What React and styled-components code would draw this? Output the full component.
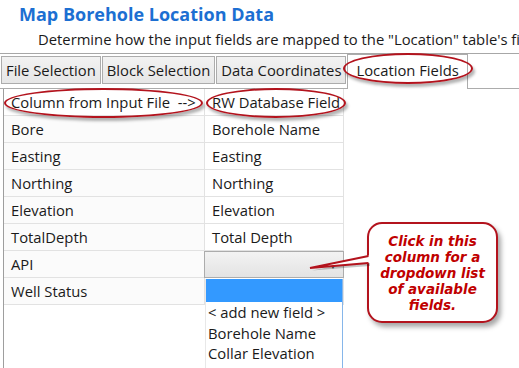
import React from 'react';
import styled, { createGlobalStyle } from 'styled-components';

const GlobalStyle = createGlobalStyle`
  html, body {
    margin: 0;
    padding: 0;
    background: #ffffff;
  }
  * {
    box-sizing: border-box;
  }
`;

const Page = styled.div`
  position: relative;
  width: 519px;
  height: 368px;
  overflow: hidden;
  display: flex;
  flex-direction: column;
  font-family: "Open Sans", "Noto Sans", sans-serif;
  color: #1a1a1a;
`;

const Header = styled.div`
  height: 54px;
  padding-top: 2px;
  border-bottom: 1px solid #a7a7a7;
  flex: none;
  overflow: hidden;
`;

const Title = styled.div`
  padding-left: 19px;
  font-size: 18px;
  line-height: 24px;
  font-weight: 700;
  color: #1c6fd2;
`;

const Subtitle = styled.div`
  margin-top: 3px;
  padding-left: 38px;
  font-size: 14.8px;
  line-height: 20px;
  white-space: nowrap;
`;

const TabStrip = styled.div`
  display: flex;
  align-items: flex-start;
  height: 35px;
  padding-left: 1px;
  border-bottom: 1px solid #acacac;
  flex: none;
`;

const Tab = styled.div`
  display: flex;
  align-items: center;
  height: ${p => (p.$active ? '35px' : '28px')};
  margin-top: ${p => (p.$active ? '0' : '2px')};
  padding: ${p => (p.$active ? '0 8px 4px' : '0 4px')};
  border: 1px solid #acacac;
  border-bottom: ${p => (p.$active ? 'none' : '1px solid #acacac')};
  margin-right: ${p => (p.$active ? '0' : '1px')};
  background: ${p => (p.$active ? '#ffffff' : 'linear-gradient(#f2f2f2, #e6e6e6)')};
  font-size: 14.8px;
  white-space: nowrap;
  position: relative;
  z-index: ${p => (p.$active ? 1 : 0)};
`;

const Panel = styled.div`
  flex: 1;
  margin-left: 3px;
  border-left: 1px solid #9e9e9e;
`;

const Table = styled.div`
  display: grid;
  grid-template-columns: 201px 139px;
  grid-auto-rows: 27px;
`;

const Cell = styled.div`
  display: flex;
  align-items: center;
  padding-left: 7px;
  border-right: 1px solid #e2e2e2;
  border-bottom: 1px solid #e2e2e2;
  background: ${p => (p.$shade ? '#fbfbfb' : '#ffffff')};
  font-size: 14.8px;
  white-space: nowrap;
`;

const Combo = styled.div`
  position: relative;
  border: 1px solid #acacac;
  background: linear-gradient(#f3f3f3, #e3e3e3);
  margin-left: -1px;
`;

const ComboArrow = styled.span`
  position: absolute;
  right: 6px;
  top: 8px;
  font-size: 8px;
  color: #444;
`;

const DropList = styled.div`
  position: absolute;
  left: 205px;
  top: 279px;
  width: 138px;
  height: 100px;
  background: #ffffff;
  border-right: 1px solid #86b6ea;
  border-left: 1px solid #e8e8e8;
  font-size: 14.8px;
`;

const DropItem = styled.div`
  height: ${p => (p.$selected ? '23px' : '20.5px')};
  line-height: 20.5px;
  padding-left: 2px;
  background: ${p => (p.$selected ? '#3399ff' : 'transparent')};
  white-space: nowrap;
`;

const Ring = styled.div`
  position: absolute;
  left: ${p => p.$x}px;
  top: ${p => p.$y}px;
  width: ${p => p.$w}px;
  height: ${p => p.$h}px;
  border: 2px solid #b3131d;
  border-radius: 50%;
  box-shadow: 2px 3px 3px rgba(0, 0, 0, 0.3);
  z-index: 5;
`;

const Callout = styled.div`
  position: absolute;
  left: 367px;
  top: 222px;
  width: 131px;
  height: 101px;
  border: 2px solid #b3131d;
  border-radius: 15px;
  background: #ffffff;
  box-shadow: 3px 4px 5px rgba(0, 0, 0, 0.35);
  display: flex;
  align-items: center;
  justify-content: center;
  text-align: center;
  font-family: "DejaVu Sans", "Verdana", sans-serif;
  font-size: 13.5px;
  line-height: 16px;
  font-weight: 700;
  font-style: italic;
  color: #c00000;
  z-index: 6;
`;

const Pointer = styled.svg`
  position: absolute;
  left: 300px;
  top: 245px;
  width: 80px;
  height: 35px;
  z-index: 7;
  overflow: visible;
`;

const fields = [
  ['Bore', 'Borehole Name'],
  ['Easting', 'Easting'],
  ['Northing', 'Northing'],
  ['Elevation', 'Elevation'],
  ['TotalDepth', 'Total Depth'],
];

const tabs = ['File Selection', 'Block Selection', 'Data Coordinates', 'Location Fields'];

export default function App() {
  return (
    <Page>
      <GlobalStyle />
      <Header>
        <Title>Map Borehole Location Data</Title>
        <Subtitle>Determine how the input fields are mapped to the "Location" table's fi</Subtitle>
      </Header>
      <TabStrip>
        {tabs.map((t, i) => (
          <Tab key={t} $active={i === 3}>{t}</Tab>
        ))}
      </TabStrip>
      <Panel>
        <Table>
          <Cell>Column from Input File&nbsp; --&gt;</Cell>
          <Cell>RW Database Field</Cell>
          {fields.map(([a, b]) => (
            <React.Fragment key={a}>
              <Cell $shade>{a}</Cell>
              <Cell>{b}</Cell>
            </React.Fragment>
          ))}
          <Cell $shade>API</Cell>
          <Combo><ComboArrow>▼</ComboArrow></Combo>
          <Cell $shade>Well Status</Cell>
          <Cell />
        </Table>
      </Panel>

      <DropList>
        <DropItem $selected />
        <DropItem>&lt; add new field &gt;</DropItem>
        <DropItem>Borehole Name</DropItem>
        <DropItem>Collar Elevation</DropItem>
      </DropList>

      <Ring $x={4} $y={88} $w={199} $h={30} />
      <Ring $x={206} $y={88} $w={140} $h={30} />
      <Ring $x={343} $y={53} $w={130} $h={31} />

      <Callout>
        Click in this<br />
        column for a<br />
        dropdown list<br />
        of available<br />
        fields.
      </Callout>
      <Pointer viewBox="0 0 80 35">
        <polygon points="12,25.5 70,14 70,21" fill="rgba(0,0,0,0.22)" />
        <polygon points="10,23 71,10 71,18" fill="#ffffff" />
        <polyline points="68.5,11 10,23 68.5,18" fill="none" stroke="#b3131d" strokeWidth="2" strokeLinejoin="miter" />
      </Pointer>
    </Page>
  );
}
